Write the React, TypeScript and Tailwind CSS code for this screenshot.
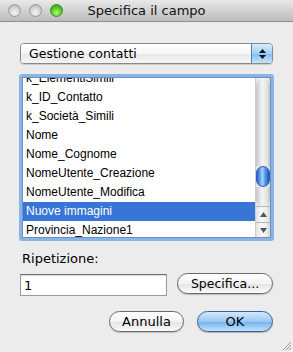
import { useState } from "react";

const rows = [
  "k_ElementiSimili",
  "k_ID_Contatto",
  "k_Società_Simili",
  "Nome",
  "Nome_Cognome",
  "NomeUtente_Creazione",
  "NomeUtente_Modifica",
  "Nuove immagini",
  "Provincia_Nazione1",
];

function Light({ color }: { color: "grey" | "green" }) {
  const cls =
    color === "green"
      ? "bg-[radial-gradient(circle_at_50%_70%,#b8f58a_0%,#5fcf2c_45%,#2f8f12_100%)] border-[#3a8a1c]"
      : "bg-[radial-gradient(circle_at_50%_70%,#f4f4f4_0%,#d6d6d6_50%,#a9a9a9_100%)] border-[#9a9a9a]";
  return <div className={`w-[13px] h-[13px] rounded-full border ${cls}`} />;
}

export default function App() {
  const [selected, setSelected] = useState(7);
  const [rep, setRep] = useState("1");

  return (
    <div
      className="w-[293px] h-[352px] bg-[#ececec] flex flex-col text-black overflow-hidden"
      style={{ fontFamily: '"DejaVu Sans", "Liberation Sans", sans-serif' }}
    >
      {/* Title bar */}
      <div className="relative h-[22px] flex items-center bg-[linear-gradient(to_bottom,#e9e9e9,#bcbcbc)] border-b border-[#8f8f8f]">
        <div className="flex gap-[8px] pl-[8px]">
          <Light color="grey" />
          <Light color="grey" />
          <Light color="green" />
        </div>
        <div className="absolute inset-0 flex items-center justify-center text-[13px] text-[#111] pointer-events-none">
          Specifica il campo
        </div>
      </div>

      <div className="flex flex-col px-[20px] pt-[21px]">
        {/* Popup */}
        <div className="flex h-[21px] rounded-[4px] border border-[#8a8a8a] overflow-hidden shadow-[0_1px_1px_rgba(0,0,0,0.15)]">
          <div className="flex-1 bg-[linear-gradient(to_bottom,#ffffff,#f6f6f6_50%,#e9e9e9_51%,#f4f4f4)] text-[12.5px] leading-[19px] pl-[8px]">
            Gestione contatti
          </div>
          <div className="w-[21px] border-l border-[#5b7fb5] bg-[linear-gradient(to_bottom,#d8ecfd,#9fd0f7_50%,#7dbdf2_51%,#c4e6fc)] flex flex-col items-center justify-center gap-[2px]">
            <svg width="7" height="4" viewBox="0 0 7 4">
              <path d="M3.5 0 L7 4 L0 4 Z" fill="#111" />
            </svg>
            <svg width="7" height="4" viewBox="0 0 7 4">
              <path d="M0 0 L7 0 L3.5 4 Z" fill="#111" />
            </svg>
          </div>
        </div>

        {/* List */}
        <div className="mt-[10px] h-[167px] rounded-[3px] border-[3px] border-[#8ab4e6] -mx-[1px]">
          <div className="flex h-full border border-[#6c8fbf] bg-white">
            <div
              className="flex-1 overflow-hidden"
              style={{ fontFamily: '"Liberation Sans", Arial, sans-serif' }}
            >
              <div className="-mt-[9px]">
                {rows.map((r, i) => (
                  <div
                    key={r}
                    onClick={() => setSelected(i)}
                    className={`h-[19px] leading-[19px] text-[12px] pl-[3px] whitespace-nowrap ${
                      i === selected ? "bg-[#3875d7] text-white" : "text-black"
                    }`}
                  >
                    {r}
                  </div>
                ))}
              </div>
            </div>
            {/* Scrollbar */}
            <div className="w-[15px] flex flex-col border-l border-[#d0d0d0] bg-[linear-gradient(to_right,#e2e2e2,#f8f8f8_40%,#eeeeee_70%,#d8d8d8)]">
              <div className="flex-1 flex flex-col">
                <div className="h-[87px] bg-[linear-gradient(to_right,#c8c8c8,#f4f4f4_45%,#e6e6e6_75%,#c4c4c4)] rounded-t-[8px] mt-[1px]" />
                <div className="h-[21px] rounded-[8px] border border-[#2b5fb8] bg-[linear-gradient(to_right,#1f5fd0,#a8d2fa_45%,#4c94ea_70%,#1e55b8)]" />
                <div className="flex-1 rounded-b-[8px] bg-[linear-gradient(to_right,#c8c8c8,#f4f4f4_45%,#e6e6e6_75%,#c4c4c4)]" />
              </div>
              <div className="h-[16px] flex items-center justify-center border-t border-[#b8b8b8]">
                <svg width="7" height="5" viewBox="0 0 7 5">
                  <path d="M3.5 0 L7 5 L0 5 Z" fill="#555" />
                </svg>
              </div>
              <div className="h-[15px] flex items-center justify-center border-t border-[#b8b8b8]">
                <svg width="7" height="5" viewBox="0 0 7 5">
                  <path d="M0 0 L7 0 L3.5 5 Z" fill="#555" />
                </svg>
              </div>
            </div>
          </div>
        </div>

        {/* Ripetizione */}
        <div className="mt-[9px] text-[13px] leading-[17px] pl-[2px]">Ripetizione:</div>
        <div className="mt-[7px] flex items-center">
          <input
            value={rep}
            onChange={(e) => setRep(e.target.value)}
            className="w-[147px] h-[22px] border border-[#9a9a9a] border-t-[#6f6f6f] bg-white text-[13px] px-[3px] outline-none shadow-[inset_0_1px_1px_rgba(0,0,0,0.15)]"
          />
          <button className="ml-[10px] -mt-[3px] w-[96px] h-[21px] rounded-full border border-[#6a6a6a] bg-[linear-gradient(to_bottom,#ffffff,#f3f3f3_50%,#e4e4e4_51%,#fafafa)] text-[12.5px] leading-[19px] shadow-[0_1px_1px_rgba(0,0,0,0.2)]">
            Specifica...
          </button>
        </div>

        {/* Buttons */}
        <div className="mt-[15px] flex justify-end gap-[13px]">
          <button className="w-[75px] h-[21px] rounded-full border border-[#6a6a6a] bg-[linear-gradient(to_bottom,#ffffff,#f3f3f3_50%,#e4e4e4_51%,#fafafa)] text-[13px] leading-[19px] shadow-[0_1px_1px_rgba(0,0,0,0.2)]">
            Annulla
          </button>
          <button className="w-[76px] h-[21px] rounded-full border border-[#3b5f9a] bg-[linear-gradient(to_bottom,#d4e8fb,#98c8f3_50%,#72b0ee_51%,#c2e2fb)] text-[13px] leading-[19px] shadow-[0_1px_1px_rgba(0,0,0,0.25)]">
            OK
          </button>
        </div>
      </div>

      {/* resize grip */}
      <div className="flex-1 flex items-end justify-end">
        <svg width="11" height="11" viewBox="0 0 11 11" className="mb-[1px] mr-[1px]">
          <path d="M10 2 L2 10 M10 5 L5 10 M10 8 L8 10" stroke="#9a9a9a" strokeWidth="1" />
        </svg>
      </div>
    </div>
  );
}
